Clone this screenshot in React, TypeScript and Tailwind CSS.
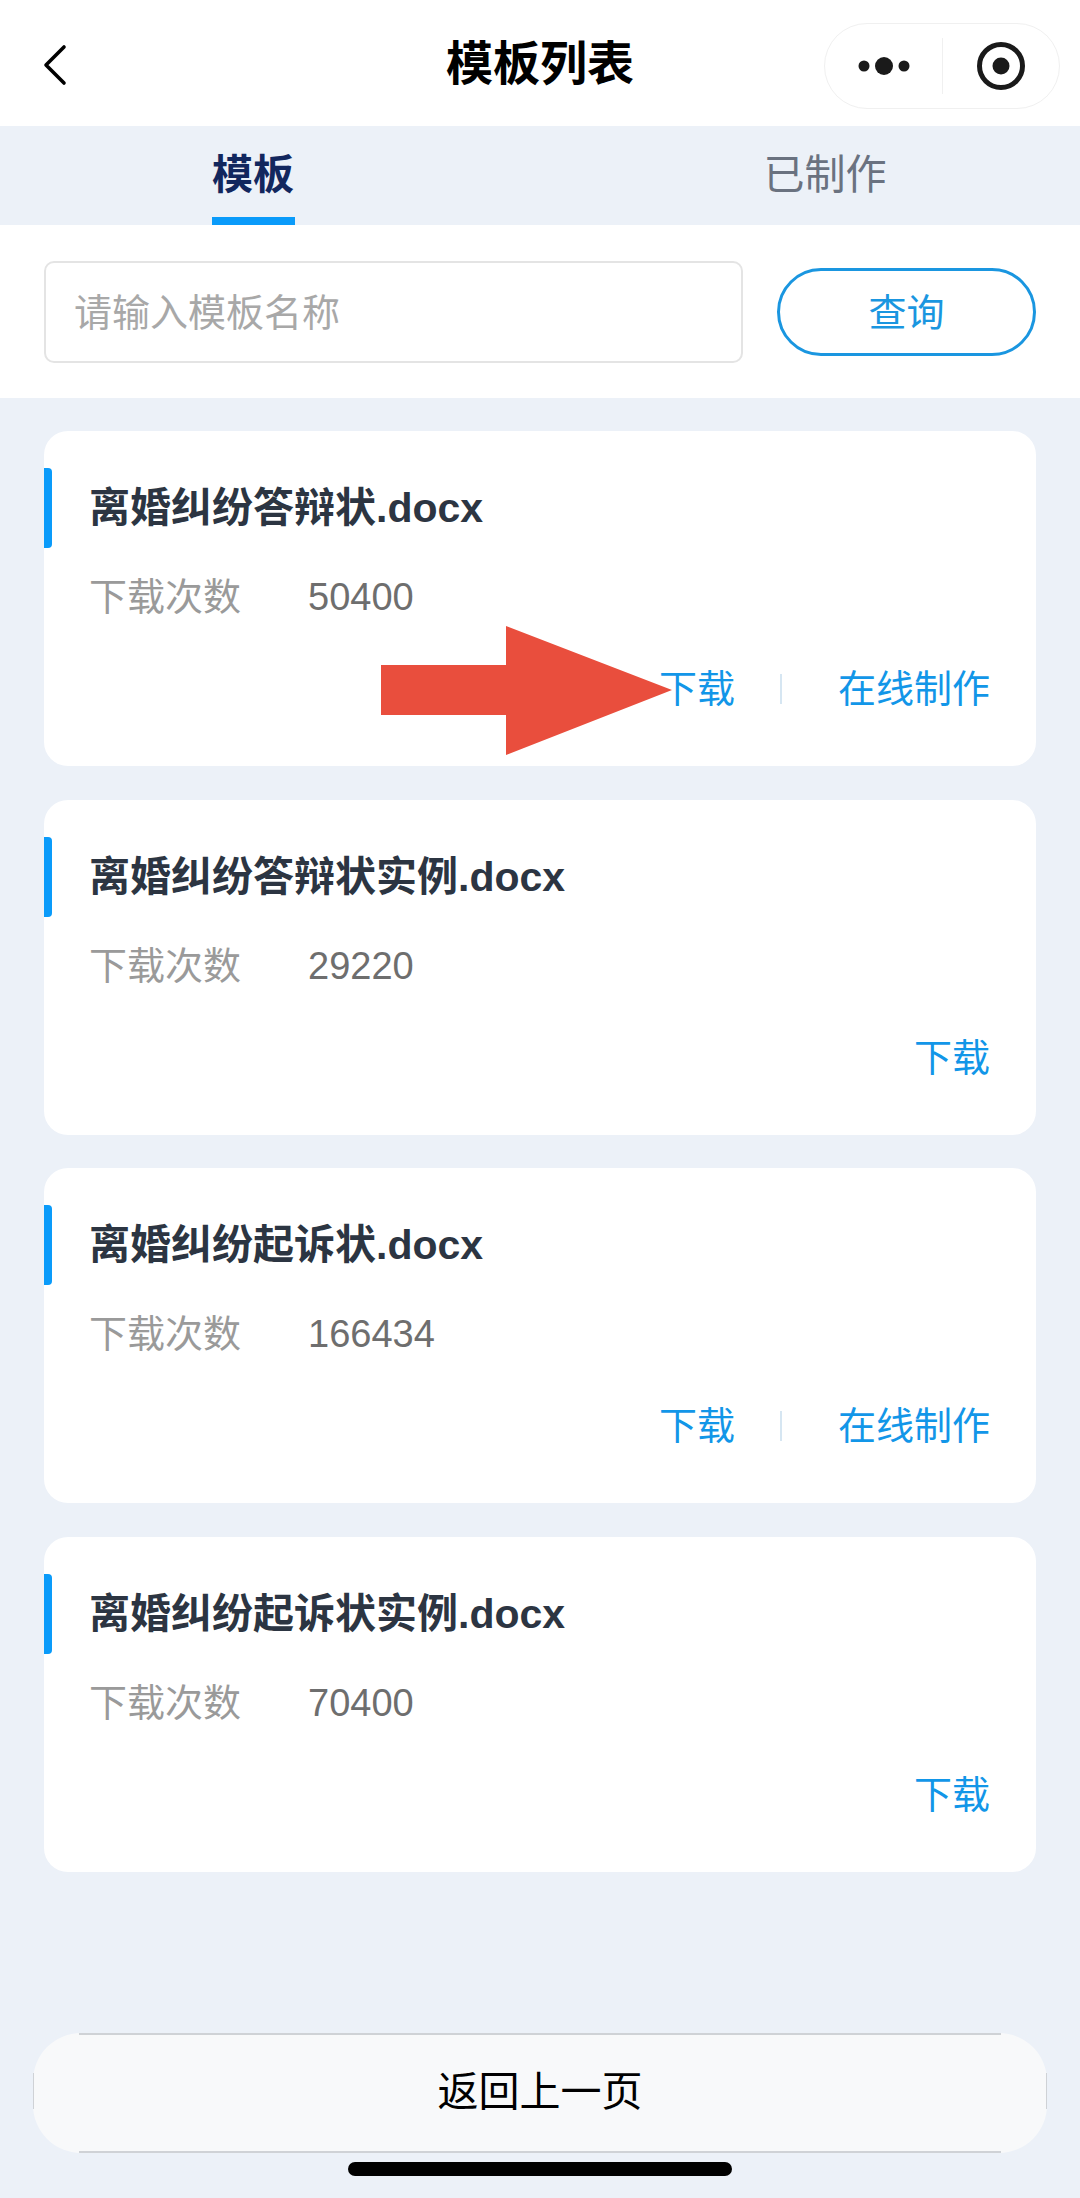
const font = "font-['Liberation_Sans','Noto_Sans_CJK_SC',sans-serif]";

type Item = { title: string; count: string; online: boolean };
const items: Item[] = [
  { title: "离婚纠纷答辩状.docx", count: "50400", online: true },
  { title: "离婚纠纷答辩状实例.docx", count: "29220", online: false },
  { title: "离婚纠纷起诉状.docx", count: "166434", online: true },
  { title: "离婚纠纷起诉状实例.docx", count: "70400", online: false },
];

function Card({ item }: { item: Item }) {
  return (
    <div className="relative h-[335px] rounded-[24px] bg-white pl-[45px] pr-[46px] pt-[56px]">
      <div className="absolute left-0 top-[37px] h-[80px] w-[8px] rounded-r-[4px] bg-[#0a9bfa]" />
      <div className="h-[42px] text-[41px] leading-[42px] font-bold text-[#2c3542]">{item.title}</div>
      <div className="mt-[46px] flex h-[44px] items-center text-[38px] leading-[44px] text-[#9a9a9a]">
        <span className="w-[219px]">下载次数</span>
        <span className="text-[#6e6e6e]">{item.count}</span>
      </div>
      <div className="mt-[48px] flex h-[44px] items-center justify-end text-[38px] leading-[44px] text-[#1296e8]">
        <span>下载</span>
        {item.online && <span className="ml-[45px] mr-[56px] h-[30px] w-[2px] bg-[#d6e6f2]" />}
        {item.online && <span>在线制作</span>}
      </div>
    </div>
  );
}

export default function App() {
  return (
    <div className={`${font} relative flex h-[2198px] w-[1080px] flex-col overflow-hidden bg-[#ecf1f8]`}>
      <header className="relative flex h-[126px] items-center justify-center bg-white">
        <svg className="absolute left-[42px] top-[44px]" width="26" height="42" viewBox="0 0 26 42" fill="none">
          <path d="M22 3 L4 21 L22 39" stroke="#000" strokeWidth="3.6" strokeLinecap="round" strokeLinejoin="round" />
        </svg>
        <h1 className="translate-y-[1px] text-[47px] font-bold text-black">模板列表</h1>
        <div className="absolute left-[824px] top-[23px] flex h-[86px] w-[236px] items-center rounded-[43px] border border-[#f0f0f0] bg-white">
          <svg className="ml-[33px]" width="54" height="20" viewBox="0 0 54 20">
            <circle cx="6" cy="10" r="5.5" fill="#1a1a1a" />
            <circle cx="26" cy="10" r="9" fill="#1a1a1a" />
            <circle cx="46" cy="10" r="5.5" fill="#1a1a1a" />
          </svg>
          <div className="ml-[30px] h-[56px] w-px bg-[#f0f0f0]" />
          <svg className="ml-[34px]" width="48" height="48" viewBox="0 0 48 48" fill="none">
            <circle cx="24" cy="24" r="21.5" stroke="#1a1a1a" strokeWidth="5" />
            <circle cx="24" cy="24" r="8.5" fill="#1a1a1a" />
          </svg>
        </div>
      </header>

      <nav className="flex h-[99px]">
        <div className="relative flex w-[506px] shrink-0 items-center justify-center text-[41px] font-bold text-[#12275e]">
          模板
          <span className="absolute bottom-0 left-[212px] h-[8px] w-[83px] bg-[#0a9bfa]" />
        </div>
        <div className="flex flex-1 items-center justify-center pl-[64px] text-[41px] text-[#6a7280]">已制作</div>
      </nav>

      <div className="flex h-[173px] items-start bg-white px-[44px] pt-[36px]">
        <div className="flex h-[102px] w-[699px] items-center rounded-[10px] border-2 border-[#e4e4e4] pl-[28px] pt-[2px] text-[38px] text-[#a8a8a8]">
          请输入模板名称
        </div>
        <button className="ml-[34px] mt-[7px] h-[88px] w-[259px] rounded-[44px] border-[3px] border-[#1a96e0] pt-[2px] text-[38px] text-[#1a96e0]">
          查询
        </button>
      </div>

      <main className="flex flex-col gap-[33.5px] px-[44px] pt-[33px]">
        {items.map((item) => (
          <Card key={item.title} item={item} />
        ))}
      </main>

      <div className="mt-auto flex flex-col items-center pb-[22px]">
        <button className="relative h-[120px] w-[1014px] rounded-[48px] bg-[#f8f9fa] text-[41px] text-black">
          返回上一页
          <span className="absolute inset-x-[46px] top-0 h-[2px] bg-[#cfd2d6]" />
          <span className="absolute inset-x-[46px] bottom-0 h-[2px] bg-[#cfd2d6]" />
          <span className="absolute left-0 top-[40px] h-[36px] w-px bg-[#cfd2d6]" />
          <span className="absolute right-0 top-[40px] h-[36px] w-px bg-[#cfd2d6]" />
        </button>
        <div className="mt-[9px] h-[14px] w-[384px] rounded-[7px] bg-black" />
      </div>

      <svg className="absolute left-[381px] top-[626px]" width="293" height="130" viewBox="0 0 293 130">
        <polygon points="0,39 125,39 125,0 291,64 125,129 125,89 0,89" fill="#e94e3d" />
      </svg>
    </div>
  );
}
